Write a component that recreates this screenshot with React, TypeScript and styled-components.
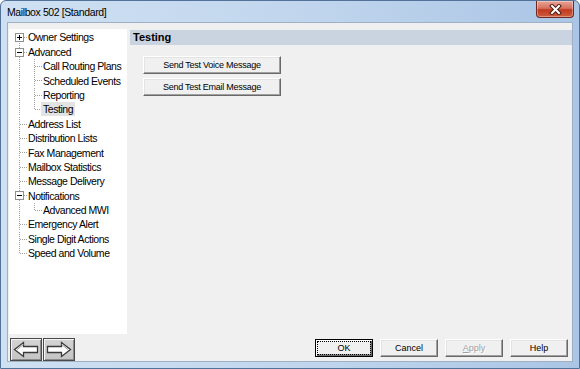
import React from 'react';
import styled, { createGlobalStyle } from 'styled-components';

type Line = 'none' | 'full' | 'top' | 'bottom';

interface Connector {
  v: Line;
  h?: boolean;
  box?: 'plus' | 'minus';
}

interface TreeNode {
  label: string;
  cells: Connector[];
  selected?: boolean;
}

const V: Connector = { v: 'full' };
const TEE: Connector = { v: 'full', h: true };
const END: Connector = { v: 'top', h: true };

const nodes: TreeNode[] = [
  { label: 'Owner Settings', cells: [{ v: 'bottom', h: true, box: 'plus' }] },
  { label: 'Advanced', cells: [{ v: 'full', h: true, box: 'minus' }] },
  { label: 'Call Routing Plans', cells: [V, TEE] },
  { label: 'Scheduled Events', cells: [V, TEE] },
  { label: 'Reporting', cells: [V, TEE] },
  { label: 'Testing', cells: [V, END], selected: true },
  { label: 'Address List', cells: [TEE] },
  { label: 'Distribution Lists', cells: [TEE] },
  { label: 'Fax Management', cells: [TEE] },
  { label: 'Mailbox Statistics', cells: [TEE] },
  { label: 'Message Delivery', cells: [TEE] },
  { label: 'Notifications', cells: [{ v: 'full', h: true, box: 'minus' }] },
  { label: 'Advanced MWI', cells: [V, END] },
  { label: 'Emergency Alert', cells: [TEE] },
  { label: 'Single Digit Actions', cells: [TEE] },
  { label: 'Speed and Volume', cells: [END] },
];

const ROW_H = 14.4;

const ConnectorCell = ({ v, h, box }: Connector) => {
  const mid = 7.5;
  const y1 = v === 'bottom' ? mid : 0;
  const y2 = v === 'top' ? mid : ROW_H;
  return (
    <svg width="15" height={ROW_H} viewBox={`0 0 15 ${ROW_H}`} shapeRendering="crispEdges">
      {v !== 'none' && (
        <line x1="7.5" y1={y1} x2="7.5" y2={y2} stroke="#a0a0a0" strokeDasharray="1 1" />
      )}
      {h && (
        <line x1={box ? 12 : 8} y1={mid} x2="15" y2={mid} stroke="#a0a0a0" strokeDasharray="1 1" />
      )}
      {box && (
        <g>
          <rect x="3.5" y="3.5" width="8" height="8" fill="#fff" stroke="#8e8f8f" />
          <line x1="5" y1={mid} x2="10" y2={mid} stroke="#000" />
          {box === 'plus' && <line x1="7.5" y1="5" x2="7.5" y2="10" stroke="#000" />}
        </g>
      )}
    </svg>
  );
};

const Arrow = ({ dir }: { dir: 'left' | 'right' }) => (
  <svg width="26" height="17" viewBox="0 0 26 17">
    <g transform={dir === 'right' ? 'translate(26 0) scale(-1 1)' : undefined}>
      <polygon
        points="1.5,8.5 10.5,1.5 10.5,5.5 24.5,5.5 24.5,11.5 10.5,11.5 10.5,15.5"
        fill="#fff"
        stroke="#3a3a3a"
        strokeWidth="1.3"
        strokeLinejoin="miter"
      />
      <polyline points="4,8.5 10.5,3.5" fill="none" stroke="#9a9a9a" strokeWidth="1" />
    </g>
  </svg>
);

const CloseGlyph = () => (
  <svg width="13" height="11" viewBox="0 0 13 11">
    <path d="M3 2 L10 9 M10 2 L3 9" stroke="#4b1a12" strokeWidth="4" strokeLinecap="square" />
    <path d="M3 2 L10 9 M10 2 L3 9" stroke="#fff" strokeWidth="2" strokeLinecap="square" />
  </svg>
);

const App = () => {
  return (
    <>
      <GlobalStyle />
      <Window>
        <TitleBar>
          <Title>Mailbox 502 [Standard]</Title>
          <CloseButton>
            <CloseGlyph />
          </CloseButton>
        </TitleBar>
        <Body>
          <MainRow>
            <Tree>
              {nodes.map((node) => (
                <TreeRow key={node.label}>
                  {node.cells.map((cell, i) => (
                    <ConnectorCell key={i} {...cell} />
                  ))}
                  <TreeLabel $selected={node.selected}>{node.label}</TreeLabel>
                </TreeRow>
              ))}
            </Tree>
            <Content>
              <Header>Testing</Header>
              <ActionList>
                <ActionButton>Send Test Voice Message</ActionButton>
                <ActionButton>Send Test Email Message</ActionButton>
              </ActionList>
            </Content>
          </MainRow>
          <BottomRow>
            <NavGroup>
              <NavButton>
                <Arrow dir="left" />
              </NavButton>
              <NavButton>
                <Arrow dir="right" />
              </NavButton>
            </NavGroup>
            <DialogButtons>
              <DialogButton $focused>
                <FocusRing>OK</FocusRing>
              </DialogButton>
              <DialogButton>Cancel</DialogButton>
              <DialogButton disabled>
                <u>A</u>pply
              </DialogButton>
              <DialogButton>Help</DialogButton>
            </DialogButtons>
          </BottomRow>
        </Body>
      </Window>
    </>
  );
};

const GlobalStyle = createGlobalStyle`
  html, body {
    margin: 0;
    padding: 0;
    background: #fff;
  }
  body {
    font-family: "Liberation Sans", Arial, sans-serif;
  }
  * {
    box-sizing: border-box;
  }
`;

const Window = styled.div`
  width: 580px;
  height: 369px;
  display: flex;
  flex-direction: column;
  padding: 0 6px 6px;
  border: 1px solid #52729a;
  border-radius: 6px 6px 0 0;
  background: linear-gradient(to right, #cfe0f2 0%, #c0d5ed 55%, #aac5e5 100%);
`;

const TitleBar = styled.div`
  height: 21px;
  display: flex;
  justify-content: space-between;
  align-items: flex-start;
`;

const Title = styled.div`
  line-height: 22px;
  font-size: 10.5px;
  letter-spacing: -0.4px;
  color: #000;
`;

const CloseButton = styled.div`
  width: 38px;
  height: 17px;
  margin-right: -1px;
  display: flex;
  align-items: center;
  justify-content: center;
  border: 1px solid #6e2a20;
  border-top: none;
  border-radius: 0 0 4px 4px;
  background: linear-gradient(to bottom, #e8a597 0%, #d7725f 45%, #c0391f 55%, #cf5d3f 100%);
  box-shadow: inset 0 0 0 1px rgba(255, 255, 255, 0.35);
`;

const Body = styled.div`
  flex: 1;
  display: flex;
  flex-direction: column;
  padding: 6px 0 0 1px;
  background: #f0f0f0;
  border: 1px solid #9fb0c4;
`;

const MainRow = styled.div`
  height: 305px;
  display: flex;
  gap: 3px;
`;

const Tree = styled.div`
  width: 118px;
  padding: 1.2px 0 0 3px;
  background: #fff;
`;

const TreeRow = styled.div`
  height: ${ROW_H}px;
  display: flex;
  align-items: center;
`;

const TreeLabel = styled.span<{ $selected?: boolean }>`
  margin-left: -1px;
  padding: 0 2px;
  line-height: 14px;
  font-size: 10.5px;
  letter-spacing: -0.45px;
  white-space: nowrap;
  color: #000;
  background: ${({ $selected }) => ($selected ? '#e3e3e3' : 'transparent')};
`;

const Content = styled.div`
  flex: 1;
  margin-top: 1px;
  display: flex;
  flex-direction: column;
`;

const Header = styled.div`
  height: 15px;
  padding-left: 3px;
  line-height: 15px;
  font-size: 11px;
  font-weight: 700;
  color: #000;
  background: #c9d4e0;
`;

const ActionList = styled.div`
  display: flex;
  flex-direction: column;
  gap: 4px;
  padding: 11px 0 0 13px;
`;

const RaisedButton = styled.button`
  display: flex;
  align-items: center;
  justify-content: center;
  padding: 0;
  font-family: "Liberation Sans", Arial, sans-serif;
  color: #000;
  background: #f0f0f0;
  border: 1px solid;
  border-color: #fff #696969 #696969 #fff;
  box-shadow: inset -1px -1px 0 #a0a0a0, inset 1px 1px 0 #e3e3e3;
`;

const ActionButton = styled(RaisedButton)`
  width: 138px;
  height: 18px;
  font-size: 9px;
  letter-spacing: -0.25px;
`;

const BottomRow = styled.div`
  flex: 1;
  display: flex;
  align-items: flex-start;
  padding-left: 1px;
`;

const NavGroup = styled.div`
  display: flex;
  gap: 1px;
  margin-top: 4px;
`;

const NavButton = styled.div`
  width: 32px;
  height: 23px;
  display: flex;
  align-items: center;
  justify-content: center;
  background: linear-gradient(to bottom, #d4d4d4, #c4c4c4);
  border: 1px solid #4a4a4a;
  box-shadow: inset 1px 1px 0 #f4f4f4, inset -1px -1px 0 #8c8c8c;
`;

const DialogButtons = styled.div`
  display: flex;
  gap: 7px;
  margin: 5px 4px 0 auto;
`;

const DialogButton = styled(RaisedButton)<{ $focused?: boolean }>`
  width: 58px;
  height: 18px;
  font-size: 9px;
  border-color: ${({ $focused }) => ($focused ? '#000' : '#fff #696969 #696969 #fff')};
  box-shadow: ${({ $focused }) =>
    $focused
      ? 'inset 1px 1px 0 #fff, inset -1px -1px 0 #696969, inset -2px -2px 0 #a0a0a0'
      : 'inset -1px -1px 0 #a0a0a0, inset 1px 1px 0 #e3e3e3'};
  &:disabled {
    color: #a0a0a0;
    text-shadow: 1px 1px 0 #fff;
  }
  u {
    text-decoration: underline;
  }
`;

const FocusRing = styled.span`
  width: 52px;
  height: 12px;
  display: flex;
  align-items: center;
  justify-content: center;
  outline: 1px dotted #000;
`;

export default App;
